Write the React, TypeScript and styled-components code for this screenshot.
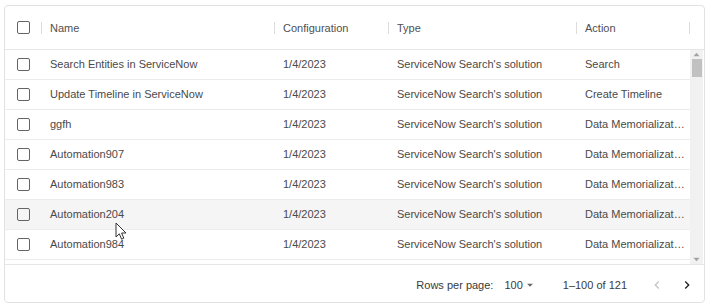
import styled, { createGlobalStyle } from 'styled-components';

const GlobalStyle = createGlobalStyle`
	body {
		margin: 0;
		background: #ffffff;
		font-family: 'Liberation Sans', Arial, sans-serif;
	}
`;

const rows = [
	{ name: 'Search Entities in ServiceNow', action: 'Search' },
	{ name: 'Update Timeline in ServiceNow', action: 'Create Timeline' },
	{ name: 'ggfh', action: 'Data Memorialization' },
	{ name: 'Automation907', action: 'Data Memorialization' },
	{ name: 'Automation983', action: 'Data Memorialization' },
	{ name: 'Automation204', action: 'Data Memorialization', hover: true },
	{ name: 'Automation984', action: 'Data Memorialization' },
];

const columns = '37px 233px 114px 188px 113px';

const App = () => {
	return (
		<>
			<GlobalStyle />
			<Grid>
				<HeaderRow>
					<HeadCell $center>
						<Checkbox />
					</HeadCell>
					<HeadCell>Name</HeadCell>
					<HeadCell>Configuration</HeadCell>
					<HeadCell>Type</HeadCell>
					<HeadCell>Action</HeadCell>
					<HeadCell $last />
				</HeaderRow>
				<Body>
					<RowList>
						{rows.map((row) => (
							<Row key={row.name} $hover={row.hover}>
								<Cell $center>
									<Checkbox />
								</Cell>
								<Cell>{row.name}</Cell>
								<Cell>1/4/2023</Cell>
								<Cell>ServiceNow Search's solution</Cell>
								<Cell>{row.action}</Cell>
							</Row>
						))}
						<Row />
					</RowList>
					<Scrollbar>
						<Arrow viewBox="0 0 8 5">
							<path d="M4 0.5 L7.5 4.5 L0.5 4.5 Z" />
						</Arrow>
						<Thumb />
						<Track />
						<Arrow viewBox="0 0 8 5">
							<path d="M0.5 0.5 L7.5 0.5 L4 4.5 Z" />
						</Arrow>
					</Scrollbar>
				</Body>
				<Footer>
					<FooterLabel>Rows per page:</FooterLabel>
					<PageSize>
						100
						<svg width="14" height="14" viewBox="0 0 24 24">
							<path d="M7 10l5 5 5-5z" fill="#666" />
						</svg>
					</PageSize>
					<PageInfo>1–100 of 121</PageInfo>
					<PageButton $disabled>
						<svg width="16" height="16" viewBox="0 0 24 24">
							<path d="M15.41 7.41 14 6l-6 6 6 6 1.41-1.41L10.83 12z" />
						</svg>
					</PageButton>
					<PageButton>
						<svg width="16" height="16" viewBox="0 0 24 24">
							<path d="M10 6 8.59 7.41 13.17 12l-4.58 4.59L10 18l6-6z" />
						</svg>
					</PageButton>
				</Footer>
				<Cursor width="13" height="19" viewBox="0 0 13 19">
					<path
						d="M1 1 L1 15 L4.3 11.8 L6.6 17.2 L8.8 16.2 L6.6 11 L11 11 Z"
						fill="#ffffff"
						stroke="#333"
						strokeWidth="1"
						strokeLinejoin="round"
					/>
				</Cursor>
			</Grid>
		</>
	);
};

export default App;

const Grid = styled.div`
	position: relative;
	margin: 5px 3px 0 4px;
	height: 298px;
	box-sizing: border-box;
	border: 1px solid #e2e2e2;
	border-radius: 4px;
	display: flex;
	flex-direction: column;
	overflow: hidden;
	color: #4a4a4a;
	font-size: 11px;
`;

const HeaderRow = styled.div`
	display: grid;
	grid-template-columns: ${columns} 1fr;
	height: 43px;
	flex-shrink: 0;
	border-bottom: 1px solid #e6e6e6;
`;

const HeadCell = styled.div<{ $center?: boolean; $last?: boolean }>`
	position: relative;
	display: flex;
	align-items: center;
	justify-content: ${(p) => (p.$center ? 'center' : 'flex-start')};
	padding: ${(p) => (p.$center ? '0' : '0 8px')};
	color: #505050;

	&::after {
		content: '';
		display: ${(p) => (p.$last ? 'none' : 'block')};
		position: absolute;
		right: 0;
		top: 16px;
		height: 12px;
		width: 1px;
		background: #dcdcdc;
	}
`;

const Body = styled.div`
	display: flex;
	flex: 1;
	min-height: 0;
	overflow: hidden;
`;

const RowList = styled.div`
	flex: 1;
	display: flex;
	flex-direction: column;
	overflow: hidden;
`;

const Row = styled.div<{ $hover?: boolean }>`
	display: grid;
	grid-template-columns: ${columns};
	height: 30px;
	flex-shrink: 0;
	box-sizing: border-box;
	border-bottom: 1px solid #ececec;
	background: ${(p) => (p.$hover ? '#f5f5f5' : '#ffffff')};
`;

const Cell = styled.div<{ $center?: boolean }>`
	padding: ${(p) => (p.$center ? '0' : '0 5px 0 8px')};
	min-width: 0;
	overflow: hidden;
	white-space: nowrap;
	text-overflow: ellipsis;
	display: block;
	line-height: 29px;

	${(p) =>
		p.$center &&
		`
		display: flex;
		align-items: center;
		justify-content: center;
	`}
`;

const Checkbox = styled.span`
	display: inline-block;
	width: 13px;
	height: 13px;
	box-sizing: border-box;
	border: 1.5px solid #646464;
	border-radius: 2px;
`;

const Scrollbar = styled.div`
	width: 13px;
	margin-right: 1px;
	display: flex;
	flex-direction: column;
	align-items: center;
	background: #f1f1f1;
	padding: 2px 0;
`;

const Arrow = styled.svg`
	width: 7px;
	height: 5px;
	fill: #a3a3a3;
	flex-shrink: 0;
`;

const Thumb = styled.div`
	width: 10px;
	height: 18px;
	margin-top: 2px;
	background: #c1c1c1;
`;

const Track = styled.div`
	flex: 1;
`;

const Footer = styled.div`
	flex-shrink: 0;
	height: 35px;
	border-top: 1px solid #e6e6e6;
	display: flex;
	align-items: center;
	justify-content: flex-end;
	padding: 2px 2px 0 0;
	color: #3a3a3a;
`;

const FooterLabel = styled.span`
	margin-right: 11px;
`;

const PageSize = styled.span`
	display: inline-flex;
	align-items: center;
	margin-right: 26px;
`;

const PageInfo = styled.span`
	margin-right: 15px;
`;

const PageButton = styled.span<{ $disabled?: boolean }>`
	display: inline-flex;
	width: 30px;
	justify-content: center;

	svg {
		fill: ${(p) => (p.$disabled ? '#c4c4c4' : '#222')};
	}
`;

const Cursor = styled.svg`
	position: absolute;
	left: 110px;
	top: 216px;
	pointer-events: none;
`;
